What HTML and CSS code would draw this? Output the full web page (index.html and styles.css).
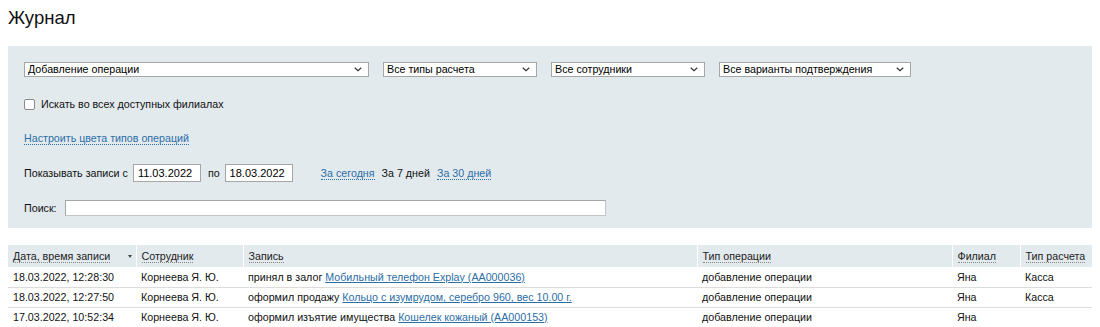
FILE: index.html
```html
<!DOCTYPE html>
<html lang="ru">
<head>
<meta charset="utf-8">
<title>Журнал</title>
<link rel="stylesheet" href="styles.css">
</head>
<body>
<h1 class="title">Журнал</h1>
<div class="filters">
  <div class="selects">
    <select class="sel sel-op"><option>Добавление операции</option></select>
    <select class="sel sel-pay"><option>Все типы расчета</option></select>
    <select class="sel sel-emp"><option>Все сотрудники</option></select>
    <select class="sel sel-conf"><option>Все варианты подтверждения</option></select>
  </div>
  <label class="check"><span class="box"></span>Искать во всех доступных филиалах</label>
  <div class="colors"><a class="dlink" href="#">Настроить цвета типов операций</a></div>
  <div class="dates">
    <span>Показывать записи с</span>
    <input class="date" type="text" value="11.03.2022">
    <span>по</span>
    <input class="date" type="text" value="18.03.2022">
    <span class="quick">
      <a class="dlink" href="#">За сегодня</a>
      <span class="cur">За 7 дней</span>
      <a class="dlink" href="#">За 30 дней</a>
    </span>
  </div>
  <div class="search">
    <span>Поиск:</span>
    <input class="search-input" type="text">
  </div>
</div>
<table class="log">
  <thead>
    <tr>
      <th class="c1"><span class="hd">Дата, время записи</span><span class="sort"></span></th>
      <th class="c2"><span class="hd">Сотрудник</span></th>
      <th class="c3"><span class="hd">Запись</span></th>
      <th class="c4"><span class="hd">Тип операции</span></th>
      <th class="c5"><span class="hd">Филиал</span></th>
      <th class="c6"><span class="hd">Тип расчета</span></th>
    </tr>
  </thead>
  <tbody>
    <tr>
      <td>18.03.2022, 12:28:30</td>
      <td>Корнеева Я. Ю.</td>
      <td>принял в залог <a href="#">Мобильный телефон Explay (АА000036)</a></td>
      <td>добавление операции</td>
      <td>Яна</td>
      <td>Касса</td>
    </tr>
    <tr>
      <td>18.03.2022, 12:27:50</td>
      <td>Корнеева Я. Ю.</td>
      <td>оформил продажу <a href="#">Кольцо с изумрудом, серебро 960, вес 10.00 г.</a></td>
      <td>добавление операции</td>
      <td>Яна</td>
      <td>Касса</td>
    </tr>
    <tr>
      <td>17.03.2022, 10:52:34</td>
      <td>Корнеева Я. Ю.</td>
      <td>оформил изъятие имущества <a href="#">Кошелек кожаный (АА000153)</a></td>
      <td>добавление операции</td>
      <td>Яна</td>
      <td></td>
    </tr>
  </tbody>
</table>
</body>
</html>
```

FILE: styles.css
```css
html, body {
  margin: 0;
  padding: 0;
  background: #fff;
}
body {
  margin: 8px;
  font-family: "Liberation Sans", Arial, sans-serif;
  font-size: 10.7px;
  color: #111;
}
.title {
  margin: 0;
  font-size: 18.5px;
  font-weight: normal;
  line-height: 20px;
  height: 24px;
}
.filters {
  margin-top: 14px;
  background: #e2eaee;
  padding: 16px 16px 14px 16px;
  height: 152px;
}
.selects {
  display: flex;
  gap: 14px;
  height: 15px;
}
.sel {
  -webkit-appearance: none;
  appearance: none;
  height: 15px;
  margin: 0;
  padding: 0 16px 0 3px;
  border: 1px solid #a6a6a6;
  border-radius: 0;
  background: #fff url("data:image/svg+xml;utf8,<svg xmlns='http://www.w3.org/2000/svg' width='8' height='5' viewBox='0 0 8 5'><path d='M0.8 0.8 L4 3.8 L7.2 0.8' fill='none' stroke='%23333' stroke-width='1.2'/></svg>") no-repeat right 6px center;
  font-family: inherit;
  font-size: 10.7px;
  line-height: 13px;
  color: #000;
}
.sel-op { width: 345px; }
.sel-pay { width: 154px; }
.sel-emp { width: 154px; }
.sel-conf { width: 192px; }
.check {
  display: flex;
  align-items: center;
  gap: 6px;
  margin-top: 21px;
  height: 12px;
}
.box {
  width: 9px;
  height: 9px;
  border: 1px solid #8a8a8a;
  border-radius: 2px;
  background: #fff;
}
.colors {
  margin-top: 21px;
  height: 14px;
  line-height: 14px;
}
.dlink {
  color: #2c6ea6;
  text-decoration: none;
  border-bottom: 1px dotted #2c6ea6;
}
.dates {
  display: flex;
  align-items: center;
  margin-top: 19px;
  height: 18px;
}
.date {
  box-sizing: border-box;
  width: 68px;
  height: 18px;
  margin: 0 7px 0 5px;
  padding: 0 4px;
  border: 1px solid #a6a6a6;
  border-radius: 0;
  font-family: inherit;
  font-size: 11px;
  color: #000;
  background: #fff;
}
.quick {
  display: flex;
  gap: 7px;
  margin-left: 21px;
}
.cur { color: #111; }
.search {
  display: flex;
  align-items: center;
  margin-top: 18px;
  height: 16px;
}
.search-input {
  box-sizing: border-box;
  width: 541px;
  height: 16px;
  margin-left: 8px;
  border: 1px solid #a6a6a6;
  border-right-color: #c4c4c4;
  border-bottom-color: #c4c4c4;
  border-radius: 0;
  padding: 0 3px;
  background: #fff;
}
.log {
  margin-top: 17px;
  width: 100%;
  border-collapse: collapse;
  table-layout: fixed;
}
.log th {
  box-sizing: border-box;
  background: #e2eaee;
  height: 22px;
  padding: 0 5px;
  text-align: left;
  font-weight: normal;
  color: #222;
  border-left: 1px solid #fff;
  position: relative;
  white-space: nowrap;
}
.log th:first-child { border-left: none; }
.hd {
  border-bottom: 1px dotted #888;
}
.sort {
  position: absolute;
  right: 4px;
  top: 10px;
  width: 0;
  height: 0;
  border-left: 2.5px solid transparent;
  border-right: 2.5px solid transparent;
  border-top: 3px solid #444;
}
.c1 { width: 128px; }
.c2 { width: 107px; }
.c3 { width: 454px; }
.c4 { width: 255px; }
.c5 { width: 68px; }
.log td {
  box-sizing: border-box;
  height: 20px;
  padding: 0 5px;
  border-bottom: 1px solid #dcdcdc;
  white-space: nowrap;
  overflow: hidden;
  color: #111;
}
.log td a {
  color: #2c6ea6;
}
```
